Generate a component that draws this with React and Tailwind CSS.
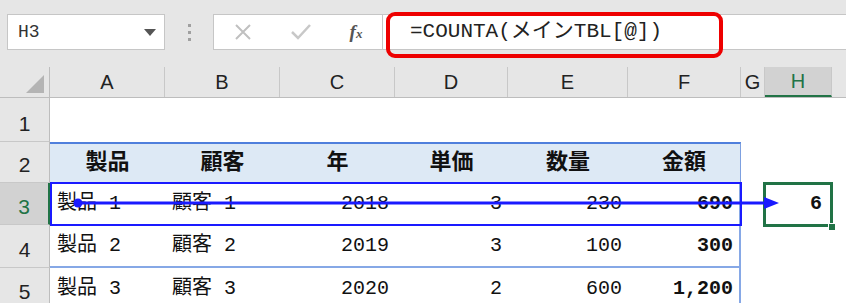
const gothic = {
  fontFamily: "'Liberation Mono', 'Noto Sans CJK JP', monospace",
};
const ui = { fontFamily: "'Liberation Sans', 'Open Sans', sans-serif" };

const cols = [
  { key: "A", w: "w-[115px]" },
  { key: "B", w: "w-[115px]" },
  { key: "C", w: "w-[115px]" },
  { key: "D", w: "w-[113px]" },
  { key: "E", w: "w-[120px]" },
  { key: "F", w: "w-[113px]" },
  { key: "G", w: "w-[24px]" },
  { key: "H", w: "w-[67px]" },
];

const rows = [
  ["製品 1", "顧客 1", "2018", "3", "230", "690"],
  ["製品 2", "顧客 2", "2019", "3", "100", "300"],
  ["製品 3", "顧客 3", "2020", "2", "600", "1,200"],
];

const heads = ["製品", "顧客", "年", "単価", "数量", "金額"];

function RowHead({ n, active, h }) {
  return (
    <div
      className={`w-[50px] shrink-0 ${h} flex items-end justify-center pb-[2px] text-[21px] border-b border-[#c8c8c8] ${
        active
          ? "bg-[#d2d2d2] text-[#217346] border-r-2 border-r-[#217346]"
          : "bg-[#e6e6e6] text-[#222] border-r border-r-[#bdbdbd]"
      }`}
      style={ui}
    >
      {n}
    </div>
  );
}

function Cell({ w, align = "right", bold, className = "", children }) {
  const a =
    align === "left"
      ? "justify-start pl-[7px]"
      : align === "center"
      ? "justify-center"
      : "justify-end pr-[6px]";
  return (
    <div
      className={`${w} shrink-0 h-full flex items-center ${a} text-[20px] text-[#111] ${
        bold ? "font-bold" : ""
      } ${className}`}
      style={gothic}
    >
      {children}
    </div>
  );
}

export default function App() {
  return (
    <div className="w-[846px] h-[303px] overflow-hidden bg-white relative">
      {/* toolbar */}
      <div className="h-[67px] bg-[#e6e6e6] flex items-start pt-[14px] pl-[7px]">
        <div className="w-[158px] h-[36px] bg-white border border-[#c6c6c6] flex items-center justify-between pl-[10px] pr-[8px]">
          <span className="text-[18px] text-[#333]" style={gothic}>
            H3
          </span>
          <svg width="12" height="7" viewBox="0 0 12 7">
            <path d="M0 0h12L6 7z" fill="#555" />
          </svg>
        </div>
        <div className="w-[48px] h-[36px] flex flex-col items-center justify-center gap-[4px]">
          <span className="w-[3px] h-[3px] bg-[#a0a0a0]" />
          <span className="w-[3px] h-[3px] bg-[#a0a0a0]" />
          <span className="w-[3px] h-[3px] bg-[#a0a0a0]" />
        </div>
        <div className="w-[170px] h-[36px] bg-white border border-[#c6c6c6] flex items-center">
          <span className="w-[58px] flex justify-center">
            <svg width="18" height="18" viewBox="0 0 18 18">
              <path d="M2 2l14 14M16 2L2 16" stroke="#c0c0c0" strokeWidth="2" />
            </svg>
          </span>
          <span className="w-[58px] flex justify-center">
            <svg width="20" height="16" viewBox="0 0 20 16">
              <path d="M1 8l6 6L19 1" stroke="#c8c8c8" strokeWidth="2.5" fill="none" />
            </svg>
          </span>
          <span
            className="flex-1 text-center text-[19px] italic font-bold text-[#555]"
            style={{ fontFamily: "'Liberation Serif', serif" }}
          >
            f<span className="text-[13px]">x</span>
          </span>
        </div>
        <div className="flex-1 h-[36px] bg-white border-y border-[#c6c6c6] relative">
          <div className="absolute left-[3px] top-[-3px] w-[337px] h-[46px] border-[4px] border-[#ee0000] rounded-[9px]" />
          <div
            className="pl-[27px] h-full flex items-center text-[21px] text-[#222]"
            style={gothic}
          >
            =COUNTA(メインTBL[@])
          </div>
        </div>
      </div>

      {/* column headers */}
      <div className="h-[31px] flex bg-[#e6e6e6] border-b border-[#bdbdbd]">
        <div className="w-[50px] shrink-0 h-full border-r border-[#bdbdbd] flex items-end justify-end pr-[5px] pb-[4px]">
          <svg width="18" height="18" viewBox="0 0 18 18">
            <path d="M18 0V18H0z" fill="#b4b4b4" />
          </svg>
        </div>
        {cols.map((c) => (
          <div
            key={c.key}
            className={`${c.w} shrink-0 h-full flex items-center justify-center text-[20px] border-r border-[#c8c8c8] ${
              c.key === "H"
                ? "bg-[#d2d2d2] text-[#217346] border-b-2 border-b-[#217346]"
                : "text-[#222]"
            }`}
            style={ui}
          >
            {c.key}
          </div>
        ))}
      </div>

      {/* row 1 */}
      <div className="h-[44px] flex">
        <RowHead n="1" h="h-[44px]" />
      </div>

      {/* row 2 header of table */}
      <div className="h-[41px] flex">
        <RowHead n="2" h="h-[41px]" />
        {heads.map((t, i) => (
          <Cell
            key={t}
            w={cols[i].w}
            align="center"
            bold
            className={`text-[22px] bg-[#dde9f5] border-t-2 border-[#4f7fdc] ${
              i === 5 ? "border-r border-r-[#7da0e0]" : ""
            }`}
          >
            {t}
          </Cell>
        ))}
      </div>

      {/* data rows */}
      {rows.map((r, ri) => {
        const h = ri === 1 ? "h-[43px]" : "h-[42px]";
        return (
          <div key={ri} className={`${h} flex`}>
            <RowHead n={String(ri + 3)} active={ri === 0} h={h} />
            {r.map((v, i) => (
              <Cell
                key={i}
                w={cols[i].w}
                align={i < 2 ? "left" : "right"}
                bold={i === 5}
                className={`${ri === 1 ? "border-b-2 border-b-[#86a8e6]" : ""} ${
                  i === 5 ? "border-r-2 border-r-[#86a8e6]" : ""
                }`}
              >
                {v}
              </Cell>
            ))}
            <div className="w-[24px] shrink-0" />
            {ri === 0 && (
              <Cell w="w-[67px]" bold className="pr-[10px]">
                6
              </Cell>
            )}
          </div>
        );
      })}

      {/* row 3 highlight rectangle */}
      <div className="absolute left-[50px] top-[182px] w-[692px] h-[44px] border-2 border-[#1a1aff] pointer-events-none" />

      {/* selected cell H3 */}
      <div className="absolute left-[763px] top-[182px] w-[70px] h-[45px] border-[3px] border-[#217346] pointer-events-none" />
      <div className="absolute left-[828px] top-[223px] w-[8px] h-[8px] bg-[#217346] border border-white" />

      {/* arrow */}
      <svg
        className="absolute left-0 top-0 pointer-events-none"
        width="846"
        height="303"
      >
        <circle cx="78" cy="203" r="4.5" fill="#1a1aff" />
        <line x1="78" y1="203" x2="766" y2="203" stroke="#1a1aff" strokeWidth="3" />
        <path d="M764 197L779 203L764 209z" fill="#1a1aff" />
      </svg>
    </div>
  );
}
